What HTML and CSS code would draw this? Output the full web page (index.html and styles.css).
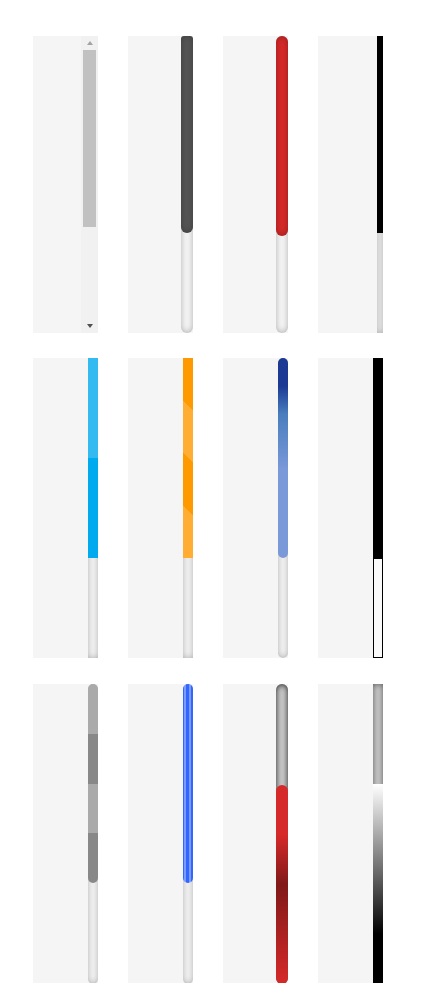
FILE: index.html
```html
<!DOCTYPE html>
<html lang="en">
<head>
    <meta charset="UTF-8">
    <meta name="viewport" content="width=device-width, initial-scale=1.0">
    <title>Scrollbar Styles</title>
    <link rel="stylesheet" href="styles.css">
</head>
<body>

    <div class="wrapper">
        <!-- row 1 -->
        <div class="box">
            <div class="pane"></div>
            <div class="bar bar-default">
                <div class="arrow arrow-up"></div>
                <div class="thumb"></div>
                <div class="arrow arrow-down"></div>
            </div>
        </div>
        <div class="box">
            <div class="pane"></div>
            <div class="bar style-1"><div class="thumb"></div></div>
        </div>
        <div class="box">
            <div class="pane"></div>
            <div class="bar style-2"><div class="thumb"></div></div>
        </div>
        <div class="box">
            <div class="pane"></div>
            <div class="bar style-3"><div class="thumb"></div></div>
        </div>

        <!-- row 2 -->
        <div class="box">
            <div class="pane"></div>
            <div class="bar style-4"><div class="thumb"></div></div>
        </div>
        <div class="box">
            <div class="pane"></div>
            <div class="bar style-5"><div class="thumb"></div></div>
        </div>
        <div class="box">
            <div class="pane"></div>
            <div class="bar style-6"><div class="thumb"></div></div>
        </div>
        <div class="box">
            <div class="pane"></div>
            <div class="bar style-7"><div class="thumb"></div><div class="rest"></div></div>
        </div>

        <!-- row 3 -->
        <div class="box">
            <div class="pane"></div>
            <div class="bar style-8"><div class="thumb"></div></div>
        </div>
        <div class="box">
            <div class="pane"></div>
            <div class="bar style-9"><div class="thumb"></div></div>
        </div>
        <div class="box">
            <div class="pane"></div>
            <div class="bar style-10"><div class="thumb"></div></div>
        </div>
        <div class="box">
            <div class="pane"></div>
            <div class="bar style-11"><div class="thumb"></div></div>
        </div>
    </div>

</body>
</html>
```

FILE: styles.css
```css
body {
    margin: 0;
    background-color: #ffffff;
    font-family: "Liberation Sans", Arial, sans-serif;
}

.wrapper {
    display: grid;
    grid-template-columns: repeat(4, 65px);
    grid-template-rows: 297px 300px 300px;
    column-gap: 30px;
    row-gap: 25px;
    padding: 36px 0 0 33px;
}

/* last row sits one pixel lower */
.wrapper .box:nth-child(n+9) {
    margin-top: 1px;
    margin-bottom: -1px;
}

.box {
    display: flex;
    background-color: #F5F5F5;
}

.pane {
    flex: 1;
}

.bar {
    display: flex;
    flex-direction: column;
    width: 10px;
    box-shadow: inset 0 0 6px rgba(0, 0, 0, 0.3);
    background-color: #F5F5F5;
}

.thumb {
    height: 200px;
    flex-shrink: 0;
}

/* default chrome scrollbar */
.bar-default {
    width: 17px;
    box-shadow: none;
    background-color: #f1f1f1;
}
.bar-default .thumb {
    height: 177px;
    margin: 0 2px;
    background-color: #c1c1c1;
}
.bar-default .arrow {
    height: 14px;
    display: flex;
    align-items: center;
    justify-content: center;
}
.arrow::after {
    content: "";
    border-left: 3.5px solid transparent;
    border-right: 3.5px solid transparent;
}
.arrow-up::after {
    border-bottom: 4px solid #a3a3a3;
}
.arrow-down {
    margin-top: auto;
}
.arrow-down::after {
    border-top: 4px solid #505050;
}

/* dark rounded */
.style-1 {
    width: 12px;
    border-radius: 6px;
}
.style-1 .thumb {
    height: 197px;
    border-radius: 3px 3px 6px 6px;
    background-color: #555;
    box-shadow: inset 0 0 6px rgba(0, 0, 0, 0.3);
}

/* red pill */
.style-2 {
    width: 12px;
    border-radius: 6px;
}
.style-2 .thumb {
    border-radius: 6px;
    background-color: #D62929;
    box-shadow: inset 0 0 6px rgba(0, 0, 0, 0.3);
}

/* thin black */
.style-3 {
    width: 6px;
}
.style-3 .thumb {
    height: 197px;
    background-color: #000;
}

/* blue two tone */
.style-4 .thumb {
    background-color: #0ae;
    background-image: linear-gradient(rgba(255, 255, 255, 0.2) 50%, transparent 50%);
}

/* orange stripes */
.style-5 .thumb {
    background-color: #F90;
    background-image: linear-gradient(45deg, rgba(255, 255, 255, 0.2) 25%, transparent 25%, transparent 50%, rgba(255, 255, 255, 0.2) 50%, rgba(255, 255, 255, 0.2) 75%, transparent 75%, transparent);
}

/* blue gradient */
.style-6 {
    border-radius: 5px;
}
.style-6 .thumb {
    border-radius: 5px;
    background-image: linear-gradient(to top, rgb(122, 153, 217) 44%, rgb(73, 125, 189) 72%, rgb(28, 58, 148) 86%);
}

/* black with border */
.style-7 {
    box-shadow: none;
    background-color: transparent;
}
.style-7 .thumb {
    background-color: #000;
}
.style-7 .rest {
    flex: 1;
    border: 1px solid #000;
    background-color: #fafafa;
}

/* gray bands */
.style-8 {
    border-radius: 5px;
}
.style-8 .thumb {
    height: 199px;
    border-radius: 5px;
    background-color: #AAA;
    background-image: linear-gradient(to top, rgba(0, 0, 0, 0.2) 25%, transparent 25%, transparent 50%, rgba(0, 0, 0, 0.2) 50%, rgba(0, 0, 0, 0.2) 75%, transparent 75%, transparent);
}

/* blue pinstripe */
.style-9 {
    border-radius: 5px;
}
.style-9 .thumb {
    height: 199px;
    border-radius: 5px;
    background-color: #3366FF;
    background-image: linear-gradient(90deg, transparent 15%, rgba(255, 255, 255, 0.35) 15%, rgba(255, 255, 255, 0.35) 35%, transparent 35%, transparent 65%, rgba(255, 255, 255, 0.35) 65%, rgba(255, 255, 255, 0.35) 80%, transparent 80%);
}

/* red on gray cylinder */
.style-10 {
    width: 12px;
    border-radius: 6px;
    justify-content: flex-end;
    background-color: #CCCCCC;
    box-shadow: inset 0 0 6px rgba(0, 0, 0, 0.9);
}
.style-10 .thumb {
    height: 199px;
    border-radius: 6px;
    background-color: #D62929;
    background-image: linear-gradient(to top, transparent, rgba(0, 0, 0, 0.4) 50%, transparent, transparent);
}

/* white to black */
.style-11 {
    justify-content: flex-end;
    background-color: #CCCCCC;
    box-shadow: inset 0 0 6px rgba(0, 0, 0, 0.6);
}
.style-11 .thumb {
    background-color: #FFF;
    background-image: linear-gradient(to top, #000 25%, transparent 100%);
}
```
